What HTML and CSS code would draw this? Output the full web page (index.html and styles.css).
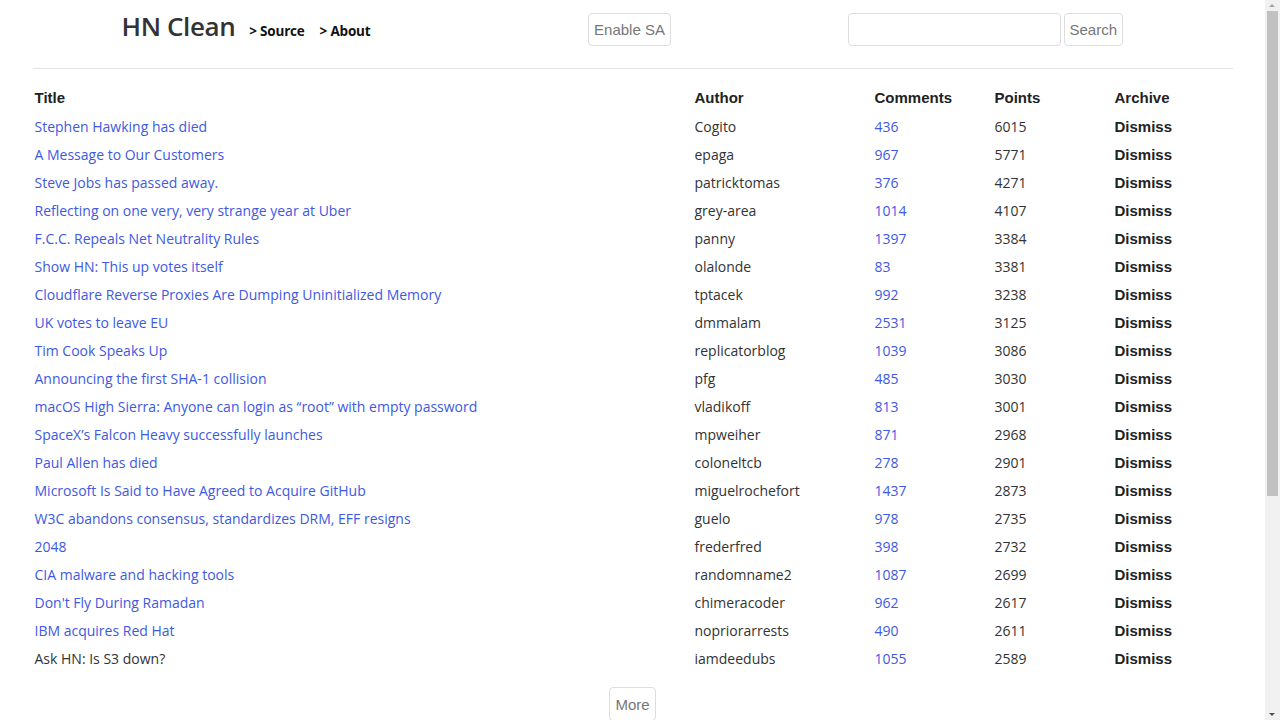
FILE: index.html
```html
<!DOCTYPE html>
<html>
<head>
<meta charset="utf-8">
<title>HN Clean</title>
<link rel="stylesheet" href="styles.css">
</head>
<body>
<div class="container">
  <header class="top">
    <div class="col brand">
      <span class="logo">HN Clean</span>
      <a class="navlink" href="#">&gt; Source</a>
      <a class="navlink" href="#">&gt; About</a>
    </div>
    <div class="col middle">
      <button class="btn">Enable SA</button>
    </div>
    <div class="col right">
      <input class="search" type="text">
      <button class="btn">Search</button>
    </div>
  </header>
  <hr class="rule">
  <table class="stories">
    <colgroup>
      <col class="c-title"><col class="c-author"><col class="c-comments"><col class="c-points"><col class="c-archive">
    </colgroup>
    <thead>
      <tr><th>Title</th><th>Author</th><th>Comments</th><th>Points</th><th>Archive</th></tr>
    </thead>
    <tbody>
      <tr><td><a href="#">Stephen Hawking has died</a></td><td>Cogito</td><td><a href="#">436</a></td><td>6015</td><td class="dismiss">Dismiss</td></tr>
      <tr><td><a href="#">A Message to Our Customers</a></td><td>epaga</td><td><a href="#">967</a></td><td>5771</td><td class="dismiss">Dismiss</td></tr>
      <tr><td><a href="#">Steve Jobs has passed away.</a></td><td>patricktomas</td><td><a href="#">376</a></td><td>4271</td><td class="dismiss">Dismiss</td></tr>
      <tr><td><a href="#">Reflecting on one very, very strange year at Uber</a></td><td>grey-area</td><td><a href="#">1014</a></td><td>4107</td><td class="dismiss">Dismiss</td></tr>
      <tr><td><a href="#">F.C.C. Repeals Net Neutrality Rules</a></td><td>panny</td><td><a href="#">1397</a></td><td>3384</td><td class="dismiss">Dismiss</td></tr>
      <tr><td><a href="#">Show HN: This up votes itself</a></td><td>olalonde</td><td><a href="#">83</a></td><td>3381</td><td class="dismiss">Dismiss</td></tr>
      <tr><td><a href="#">Cloudflare Reverse Proxies Are Dumping Uninitialized Memory</a></td><td>tptacek</td><td><a href="#">992</a></td><td>3238</td><td class="dismiss">Dismiss</td></tr>
      <tr><td><a href="#">UK votes to leave EU</a></td><td>dmmalam</td><td><a href="#">2531</a></td><td>3125</td><td class="dismiss">Dismiss</td></tr>
      <tr><td><a href="#">Tim Cook Speaks Up</a></td><td>replicatorblog</td><td><a href="#">1039</a></td><td>3086</td><td class="dismiss">Dismiss</td></tr>
      <tr><td><a href="#">Announcing the first SHA-1 collision</a></td><td>pfg</td><td><a href="#">485</a></td><td>3030</td><td class="dismiss">Dismiss</td></tr>
      <tr><td><a href="#">macOS High Sierra: Anyone can login as “root” with empty password</a></td><td>vladikoff</td><td><a href="#">813</a></td><td>3001</td><td class="dismiss">Dismiss</td></tr>
      <tr><td><a href="#">SpaceX’s Falcon Heavy successfully launches</a></td><td>mpweiher</td><td><a href="#">871</a></td><td>2968</td><td class="dismiss">Dismiss</td></tr>
      <tr><td><a href="#">Paul Allen has died</a></td><td>coloneltcb</td><td><a href="#">278</a></td><td>2901</td><td class="dismiss">Dismiss</td></tr>
      <tr><td><a href="#">Microsoft Is Said to Have Agreed to Acquire GitHub</a></td><td>miguelrochefort</td><td><a href="#">1437</a></td><td>2873</td><td class="dismiss">Dismiss</td></tr>
      <tr><td><a href="#">W3C abandons consensus, standardizes DRM, EFF resigns</a></td><td>guelo</td><td><a href="#">978</a></td><td>2735</td><td class="dismiss">Dismiss</td></tr>
      <tr><td><a href="#">2048</a></td><td>frederfred</td><td><a href="#">398</a></td><td>2732</td><td class="dismiss">Dismiss</td></tr>
      <tr><td><a href="#">CIA malware and hacking tools</a></td><td>randomname2</td><td><a href="#">1087</a></td><td>2699</td><td class="dismiss">Dismiss</td></tr>
      <tr><td><a href="#">Don't Fly During Ramadan</a></td><td>chimeracoder</td><td><a href="#">962</a></td><td>2617</td><td class="dismiss">Dismiss</td></tr>
      <tr><td><a href="#">IBM acquires Red Hat</a></td><td>nopriorarrests</td><td><a href="#">490</a></td><td>2611</td><td class="dismiss">Dismiss</td></tr>
      <tr><td>Ask HN: Is S3 down?</td><td>iamdeedubs</td><td><a href="#">1055</a></td><td>2589</td><td class="dismiss">Dismiss</td></tr>
    </tbody>
  </table>
  <div class="more-row">
    <button class="btn more">More</button>
  </div>
</div>
<div class="scrollbar" aria-hidden="true">
  <span class="sb-up"></span>
  <span class="sb-thumb"></span>
  <span class="sb-down"></span>
</div>
</body>
</html>
```

FILE: styles.css
```css
html, body {
  margin: 0;
  padding: 0;
  background: #fff;
}
body {
  font-family: "Open Sans", "Noto Sans", sans-serif;
  font-size: 14px;
  color: #333;
  padding-right: 15px;
}
a {
  color: #4059e3;
  text-decoration: none;
}
.container {
  width: 1200px;
  margin: 0 auto;
  padding-bottom: 310px;
}
.top {
  display: flex;
  align-items: flex-start;
  height: 68px;
}
.col {
  width: 400px;
  box-sizing: border-box;
}
.brand {
  display: flex;
  align-items: baseline;
  padding-left: 89px;
  padding-top: 8px;
}
.logo {
  font-family: "Open Sans", sans-serif;
  font-size: 26px;
  font-weight: 600;
  color: #333;
  letter-spacing: -0.4px;
  margin-right: 14px;
}
.navlink {
  color: #111;
  font-weight: 700;
  font-size: 13.5px;
  letter-spacing: -0.2px;
  margin-right: 15px;
}
.middle {
  display: flex;
  justify-content: center;
  padding-top: 13px;
  padding-right: 6px;
}
.right {
  display: flex;
  padding-left: 15px;
  padding-top: 13px;
  gap: 3px;
}
.btn {
  font-family: "Liberation Sans", Arial, sans-serif;
  font-size: 15px;
  color: #777;
  background: #fff;
  border: 1px solid #ddd;
  border-radius: 4px;
  height: 33px;
  padding: 0 5px;
  cursor: pointer;
}
.search {
  width: 213px;
  height: 33px;
  box-sizing: border-box;
  border: 1px solid #ddd;
  border-radius: 4px;
  padding: 0 8px;
  margin: 0;
}
.rule {
  border: 0;
  border-top: 1px solid #e2e2e2;
  margin: 0;
}
.stories {
  width: 1200px;
  border-collapse: collapse;
  table-layout: fixed;
  margin-top: 14px;
}
.c-title { width: 55%; }
.c-author { width: 15%; }
.c-comments { width: 10%; }
.c-points { width: 10%; }
.c-archive { width: 10%; }
.stories th {
  text-align: left;
  font-family: "Liberation Sans", Arial, sans-serif;
  font-weight: 700;
  font-size: 15px;
  color: #222;
  padding: 0 2px;
  height: 29px;
}
.stories td {
  padding: 0 2px;
  height: 28px;
  white-space: nowrap;
}
.stories td.dismiss {
  font-family: "Liberation Sans", Arial, sans-serif;
  font-weight: 700;
  font-size: 15px;
  color: #222;
}
.more-row {
  display: flex;
  justify-content: center;
  padding-top: 15px;
}
.more {
  height: 34px;
}
.scrollbar {
  position: fixed;
  top: 0;
  right: 0;
  width: 15px;
  height: 100vh;
  background: #f1f1f1;
}
.sb-thumb {
  position: absolute;
  left: 2px;
  right: 2px;
  top: 11px;
  height: 485px;
  background: #c1c1c1;
}
.sb-up, .sb-down {
  position: absolute;
  left: 4px;
  width: 0;
  height: 0;
  border-left: 3.5px solid transparent;
  border-right: 3.5px solid transparent;
}
.sb-up {
  top: 4px;
  border-bottom: 3.5px solid #a3a3a3;
}
.sb-down {
  bottom: 4px;
  border-top: 3.5px solid #505050;
}
```
